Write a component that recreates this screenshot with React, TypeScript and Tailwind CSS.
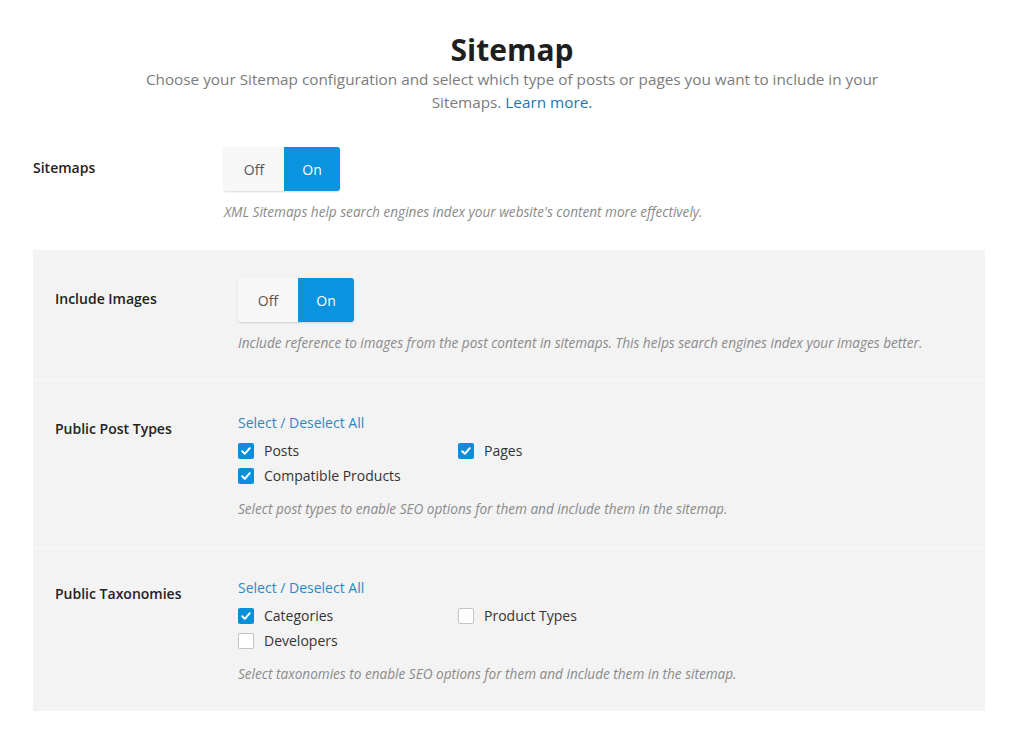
import React from 'react';

const font = { fontFamily: '"Open Sans", "Noto Sans", sans-serif' };

function Toggle({ on }: { on: boolean }) {
  return (
    <div className="flex h-[44px] w-[116px] rounded-[3px] overflow-hidden shadow-[0_1px_2px_rgba(0,0,0,0.15)] text-[14px]">
      <div className={`flex w-[60px] items-center justify-center ${on ? 'bg-[#f7f7f7] text-[#555]' : 'bg-[#0a93de] text-white'}`}>Off</div>
      <div className={`flex flex-1 items-center justify-center ${on ? 'bg-[#0a93de] text-white' : 'bg-[#f7f7f7] text-[#555]'}`}>On</div>
    </div>
  );
}

function Check({ checked, label }: { checked: boolean; label: string }) {
  return (
    <div className="flex h-[25px] items-center gap-[10px] text-[14px] text-[#333]">
      {checked ? (
        <span className="flex h-[16px] w-[16px] items-center justify-center rounded-[2px] bg-[#0a8ed9]">
          <svg width="12" height="12" viewBox="0 0 12 12" fill="none">
            <path d="M2.2 6.3 L4.8 8.8 L9.8 3.2" stroke="white" strokeWidth="2" strokeLinecap="round" strokeLinejoin="round" />
          </svg>
        </span>
      ) : (
        <span className="h-[16px] w-[16px] rounded-[2px] border border-[#c4c4c4] bg-white" />
      )}
      <span>{label}</span>
    </div>
  );
}

function Desc({ children }: { children: React.ReactNode }) {
  return <p className="text-[13.6px] leading-[18px] italic text-[#8a8a8a]">{children}</p>;
}

function CheckGroup({ items, desc }: { items: { label: string; checked: boolean }[]; desc: string }) {
  return (
    <div>
      <div className="text-[14px] leading-[16px] text-[#2e87c4]">Select / Deselect All</div>
      <div className="mt-[7px] grid w-[440px] grid-cols-2">
        {items.map((it) => (
          <Check key={it.label} checked={it.checked} label={it.label} />
        ))}
      </div>
      <div className="mt-[12px]">
        <Desc>{desc}</Desc>
      </div>
    </div>
  );
}

export default function App() {
  return (
    <div className="min-h-screen bg-white pt-[30px]" style={font}>
      <div className="text-center">
        <h1 className="text-[30px] font-bold leading-[40px] text-[#1e1e1e]">Sitemap</h1>
        <p className="mx-auto -mt-[2px] w-[780px] text-[15.3px] leading-[23px] text-[#7b7b7b]">
          Choose your Sitemap configuration and select which type of posts or pages you want to include in your
          <br />
          Sitemaps. <span className="text-[#1f74b0]">Learn more.</span>
        </p>
      </div>

      <div className="mt-[33px] flex pl-[33px]">
        <div className="w-[191px] pt-[10px] text-[14px] font-semibold text-[#222]">Sitemaps</div>
        <div>
          <Toggle on />
          <div className="mt-[12px]">
            <Desc>XML Sitemaps help search engines index your website's content more effectively.</Desc>
          </div>
        </div>
      </div>

      <div className="ml-[33px] mt-[29px] w-[952px] bg-[#f3f3f3]">
        <div className="flex border-b border-[#fafafa] pb-[28px] pl-[22px] pt-[28px]">
          <div className="w-[183px] pt-[10px] text-[14px] font-semibold text-[#222]">Include Images</div>
          <div>
            <Toggle on />
            <div className="mt-[12px]">
              <Desc>Include reference to images from the post content in sitemaps. This helps search engines index your images better.</Desc>
            </div>
          </div>
        </div>

        <div className="flex border-b border-[#fafafa] pb-[29px] pl-[22px] pt-[34px]">
          <div className="w-[183px] pt-[3px] text-[14px] font-semibold text-[#222]">Public Post Types</div>
          <CheckGroup
            items={[
              { label: 'Posts', checked: true },
              { label: 'Pages', checked: true },
              { label: 'Compatible Products', checked: true },
            ]}
            desc="Select post types to enable SEO options for them and include them in the sitemap."
          />
        </div>

        <div className="flex pb-[28px] pl-[22px] pt-[32px]">
          <div className="w-[183px] pt-[3px] text-[14px] font-semibold text-[#222]">Public Taxonomies</div>
          <CheckGroup
            items={[
              { label: 'Categories', checked: true },
              { label: 'Product Types', checked: false },
              { label: 'Developers', checked: false },
            ]}
            desc="Select taxonomies to enable SEO options for them and include them in the sitemap."
          />
        </div>
      </div>
    </div>
  );
}
